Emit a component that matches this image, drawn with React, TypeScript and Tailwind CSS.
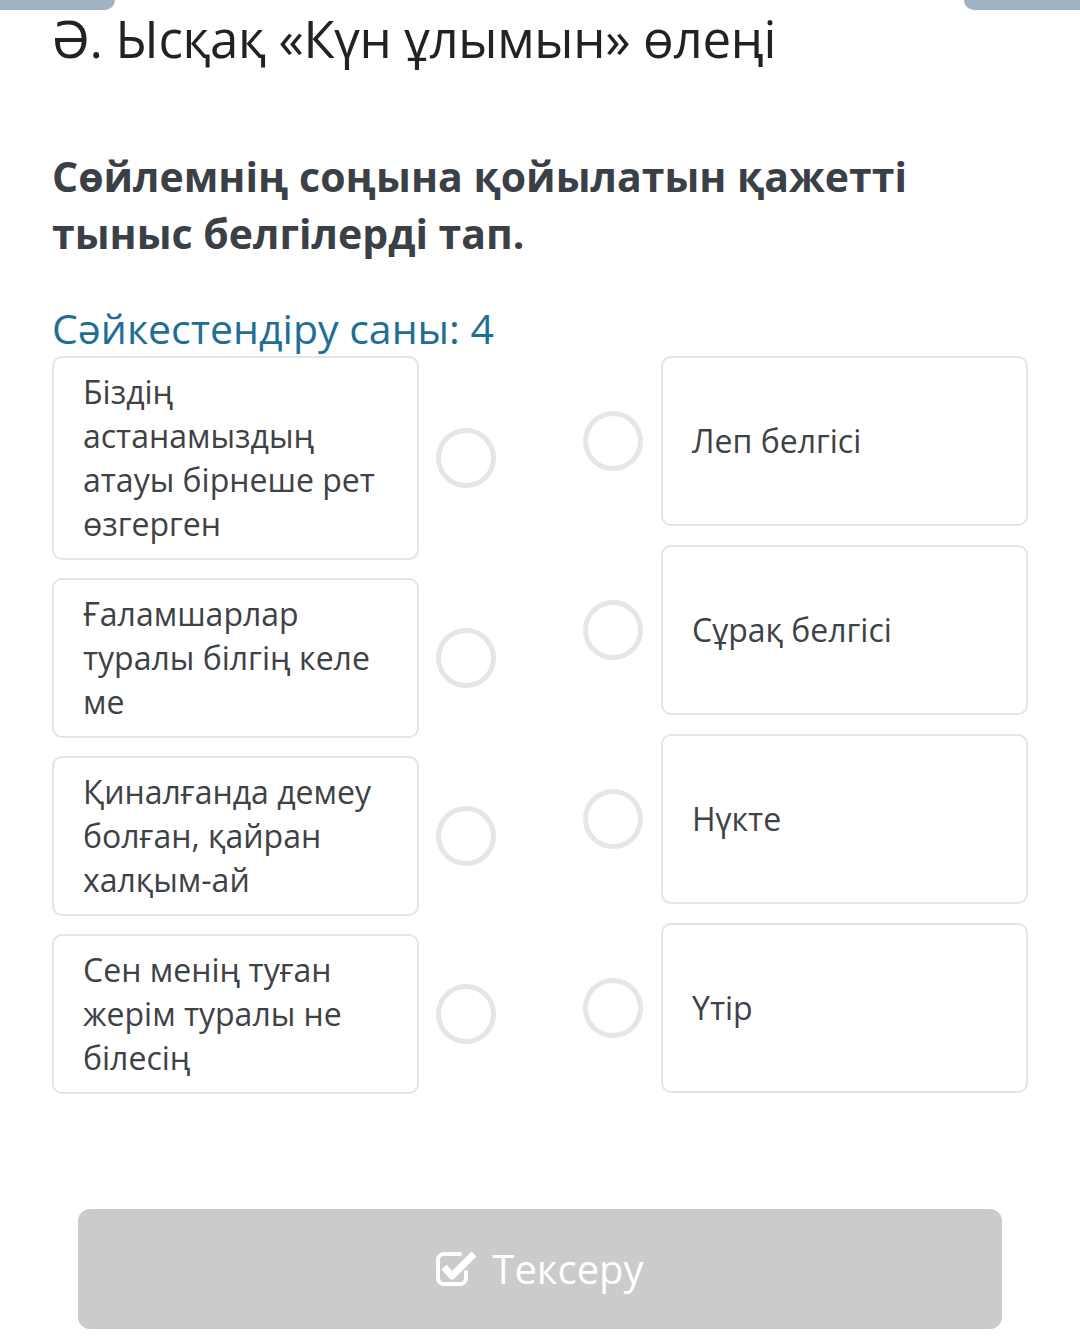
import React from 'react';

const left = [
  'Біздің астанамыздың атауы бірнеше рет өзгерген',
  'Ғаламшарлар туралы білгің келе ме',
  'Қиналғанда демеу болған, қайран халқым-ай',
  'Сен менің туған жерім туралы не білесің',
];

const right = ['Леп белгісі', 'Сұрақ белгісі', 'Нүкте', 'Үтір'];

const Circle: React.FC = () => (
  <div className="w-[60px] h-[60px] shrink-0 rounded-full border-[5px] border-[#e3e7ea] bg-white" />
);

const CheckIcon: React.FC = () => (
  <svg width="42" height="38" viewBox="0 0 42 38" fill="none">
    <path
      d="M30 22v6a6 6 0 0 1-6 6H8a6 6 0 0 1-6-6V10a6 6 0 0 1 6-6h16"
      stroke="white"
      strokeWidth="4"
      strokeLinecap="round"
    />
    <path d="M8 17l8 9L38 4" stroke="white" strokeWidth="7" strokeLinejoin="round" />
  </svg>
);

export default function App() {
  return (
    <div className="w-[1080px] h-[1343px] bg-white relative overflow-hidden" style={{ fontFamily: '"Open Sans", "Noto Sans", sans-serif' }}>
      <div className="flex justify-between h-[10px]">
        <div className="w-[115px] h-full bg-[#9fb3c2] rounded-br-[12px]" />
        <div className="w-[116px] h-full bg-[#9fb3c2] rounded-bl-[12px]" />
      </div>

      <div className="px-[52px]">
        <h1 className="text-[51px] leading-[60px] text-[#222] mt-[-2px] tracking-[-0.3px]">Ə. Ысқақ «Күн ұлымын» өлеңі</h1>

        <h2 className="mt-[80px] text-[41px] leading-[57px] font-bold text-[#3b4046]">
          Сөйлемнің соңына қойылатын қажетті
          <br />
          тыныс белгілерді тап.
        </h2>

        <div className="mt-[41px] text-[41px] leading-[50px] text-[#1f6e95]">Сәйкестендіру саны: 4</div>

        <div className="mt-[3px] flex justify-between">
          <div className="flex flex-col gap-[18px]">
            {left.map((t, i) => (
              <div key={i} className="flex items-center gap-[17px]">
                <div className="w-[367px] rounded-[10px] border-2 border-[#e4e4e4] pl-[29px] pr-[20px] py-[12px] text-[32px] leading-[44px] text-[#3d4246]">
                  {t}
                </div>
                <Circle />
              </div>
            ))}
          </div>
          <div className="flex flex-col gap-[19px]">
            {right.map((t, i) => (
              <div key={i} className="flex items-center gap-[18px]">
                <Circle />
                <div className="w-[367px] h-[170px] rounded-[10px] border-2 border-[#e4e4e4] pl-[29px] flex items-center text-[32px] leading-[44px] text-[#3d4246]">
                  {t}
                </div>
              </div>
            ))}
          </div>
        </div>

        <div className="mt-[115px] mx-[26px] h-[120px] rounded-[12px] bg-[#cbcbcb] flex items-center justify-center gap-[14px] text-white text-[40px]">
          <CheckIcon />
          <span>Тексеру</span>
        </div>
      </div>
    </div>
  );
}
